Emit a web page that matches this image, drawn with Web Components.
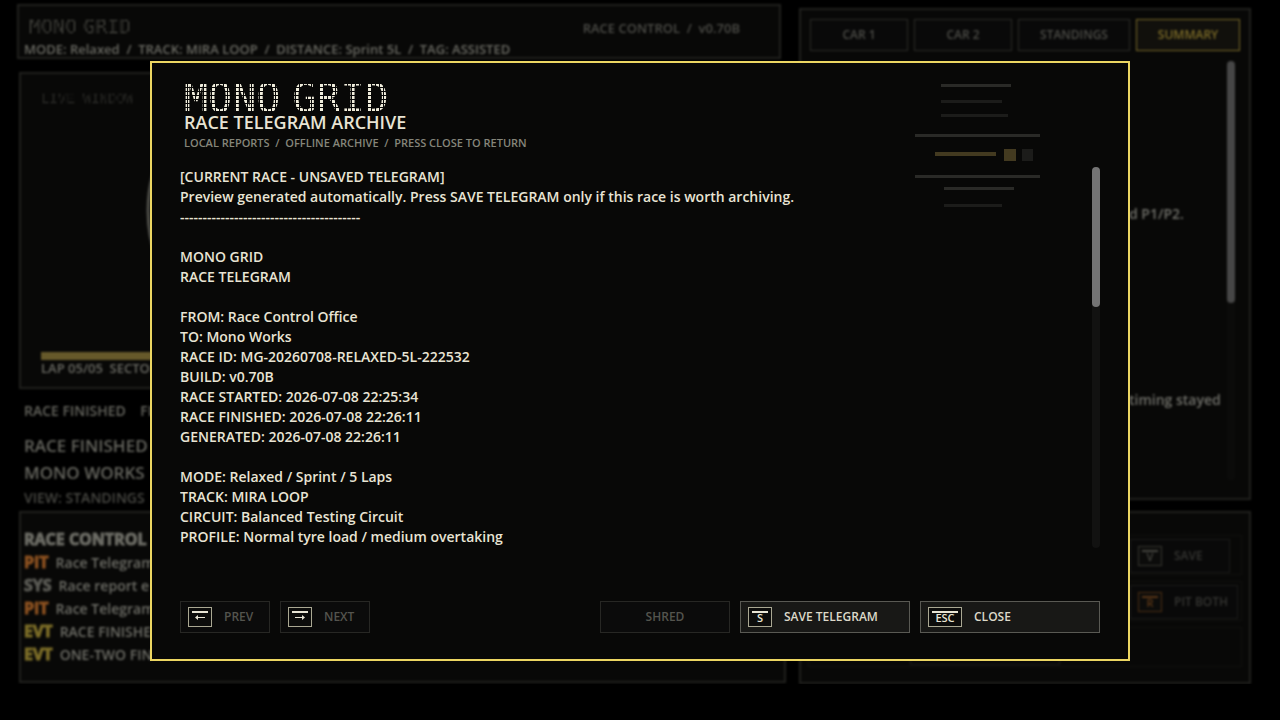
<!DOCTYPE html>
<html lang="en">
<head>
<meta charset="utf-8">
<title>Mono Grid - Race Telegram Archive</title>
<style>
  html, body { margin: 0; min-height: 100%; background: #000; }
  body { font: 600 14px/20px "Open Sans", "Noto Sans", sans-serif; color: #e8e4d4; overflow: hidden; }
</style>
</head>
<body>
<race-dashboard></race-dashboard>
<telegram-archive></telegram-archive>

<script>
const define = (name, html, setup) => {
  const template = document.createElement('template');
  template.innerHTML = html;
  customElements.define(name, class extends HTMLElement {
    constructor() {
      super();
      this.attachShadow({ mode: 'open' }).append(template.content.cloneNode(true));
    }
    connectedCallback() { if (setup) setup(this, this.shadowRoot); }
  });
};

define('dot-text', `<style>
  :host {
    --pitch: 4px; --dot: 3px;
    display: flex; gap: 12px; font-family: "DejaVu Sans Mono", monospace; font-weight: 400; white-space: nowrap;
    mask-image: linear-gradient(90deg, #000 var(--dot), transparent 0), linear-gradient(#000 var(--dot), transparent 0);
    mask-size: var(--pitch) var(--pitch);
    mask-composite: intersect;
  }
</style><slot></slot>`);

define('hud-panel', `
<style>
  :host { display: block; box-sizing: border-box; border: 2px solid #20201d; background: #080807; }
</style><slot></slot>`);

define('key-cap', `
<style>
  :host {
    display: inline-flex; flex: none; flex-direction: column; align-items: center; box-sizing: border-box;
    min-width: 24px; height: 20px; padding: 3px 3px 0; border: 1px solid #aaa893; background: #0c0c0b;
    font-size: 11px; line-height: 10px; color: #e8e4d4;
  }
  :host([wide]) { min-width: 34px; }
  i { align-self: stretch; height: 2px; background: currentColor; }
  span { display: block; }
</style><i></i><span><slot></slot></span>`);

define('arrow-icon', `
<style>
  :host { display: block; }
  :host([right]) svg { transform: scaleX(-1); }
  svg { display: block; }
</style>
<svg width="10" height="9" viewBox="0 0 10 9" aria-hidden="true"><path d="M0 4.5 3 2v2h7v1H3v2z" fill="currentColor"/></svg>`);

define('scroll-rail', `
<style>
  :host { display: block; width: 8px; border-radius: 4px; background: #121211; }
  div { height: var(--thumb, 140px); border-radius: 4px; background: var(--tone, #747474); }
</style><div></div>`);

define('hud-button', `
<style>
  :host { display: block; }
  button {
    display: flex; align-items: center; justify-content: var(--align, flex-start); gap: 12px;
    box-sizing: border-box; width: 100%; height: 32px; padding: 0 7px; border: 1px solid #595953; border-radius: 0;
    background: #181816; color: #dcd9c9; font: 600 12px/16px "Open Sans", "Noto Sans", sans-serif; text-align: left;
  }
  :host([quiet]) button { border-color: #272724; background: #0b0b0b; color: #54544e; }
  :host([tab]) button { border-color: #2a2a27; background: #090909; color: #4c4c47; }
  :host([tab][on]) button { border-color: #7a6a28; background: #11100c; color: #7d6c28; }
</style>
<button type="button"><slot name="key"></slot><slot></slot></button>`,
(host, root) => { if (host.hasAttribute('quiet')) root.querySelector('button').disabled = true; });

define('log-line', `
<style>
  :host { display: block; height: 23px; font-size: 14px; line-height: 23px; white-space: nowrap; color: #6e6e67; }
  b { margin-right: 7px; font-size: 16px; font-weight: 700; color: var(--tag, #5a5a54); -webkit-text-stroke: 1px currentColor; }
</style><b><slot name="tag"></slot></b><slot></slot>`);

define('race-header', `
<style>
  :host { display: block; }
  hud-panel { height: 55px; padding: 10px 39px 0 5px; }
  .top { display: flex; justify-content: space-between; height: 25px; }
  dot-text { --pitch: 2px; --dot: 1px; gap: 6px; font-size: 20px; line-height: 20px; height: 20px; color: #b8b8aa; padding-left: 5px; }
  .ver { padding-top: 2px; font-size: 13px; color: #4c4c47; white-space: pre; }
  .mode { font-size: 13px; line-height: 17px; color: #6a6a63; white-space: pre; }
</style>
<hud-panel>
  <div class="top"><dot-text><span>MONO</span> <span>GRID</span></dot-text><div class="ver">RACE CONTROL  /  v0.70B</div></div>
  <div class="mode">MODE: Relaxed  /  TRACK: MIRA LOOP  /  DISTANCE: Sprint 5L  /  TAG: ASSISTED</div>
</hud-panel>`);

define('live-window', `
<style>
  :host { display: block; }
  hud-panel { display: flex; flex-direction: column; height: 317px; padding: 16px 20px 10px; }
  dot-text { --pitch: 2px; --dot: 1px; gap: 8px; font-size: 14px; line-height: 16px; color: #6c6c65; }
  svg { flex: 1; display: block; min-height: 0; margin-left: 95px; }
  .bar { height: 8px; background: #66592a; }
  .lap { font-size: 13px; line-height: 17px; color: #6a6a63; white-space: pre; }
</style>
<hud-panel>
  <dot-text><span>LIVE</span> <span>WINDOW</span></dot-text>
  <svg viewBox="0 0 600 244" preserveAspectRatio="xMinYMin meet" aria-hidden="true">
    <ellipse cx="72" cy="104" rx="60" ry="90" fill="none" stroke="#50504a" stroke-width="3"/>
  </svg>
  <div class="bar"></div>
  <div class="lap">LAP 05/05  SECTOR</div>
</hud-panel>`);

define('race-status', `
<style>
  :host { display: block; padding: 11px 7px 2px 5px; color: #65655e; }
  p { margin: 0; white-space: pre; }
  .a { font-size: 14px; line-height: 22px; padding-bottom: 10px; }
  .b { font-size: 17px; line-height: 27px; }
  .c { font-size: 14px; line-height: 23px; color: #484843; }
</style>
<p class="a">RACE FINISHED    FI</p>
<p class="b">RACE FINISHED</p>
<p class="b">MONO WORKS</p>
<p class="c">VIEW: STANDINGS</p>`);

define('race-log', `
<style>
  :host { display: block; }
  hud-panel { height: 172px; padding: 14px 3px 0; overflow: hidden; }
  h2 { margin: 0; font-size: 16px; line-height: 24px; font-weight: 700; color: #6c6c65; -webkit-text-stroke: 1px currentColor; }
  .pit { --tag: #8a5020; } .evt { --tag: #7c6d28; }
</style>
<hud-panel>
  <h2>RACE CONTROL</h2>
  <log-line class="pit"><span slot="tag">PIT</span>Race Telegram</log-line>
  <log-line><span slot="tag">SYS</span>Race report e</log-line>
  <log-line class="pit"><span slot="tag">PIT</span>Race Telegram</log-line>
  <log-line class="evt"><span slot="tag">EVT</span>RACE FINISHE</log-line>
  <log-line class="evt"><span slot="tag">EVT</span>ONE-TWO FIN</log-line>
</hud-panel>`);

define('summary-panel', `
<style>
  :host { display: block; }
  hud-panel { height: 492px; padding: 9px 9px 0; }
  nav { display: grid; grid-template-columns: 98fr 98fr 112fr 104fr; gap: 6px; --align: center; }
  .view { display: flex; justify-content: space-between; padding: 10px 5px 0 319px; }
  .text { padding-top: 143px; font-size: 14px; color: #70706a; white-space: nowrap; }
  p { margin: 0 0 166px; }
  scroll-rail { height: 420px; background: #0b0b0a; --thumb: 242px; --tone: #464646; }
</style>
<hud-panel>
  <nav>
    <hud-button tab>CAR 1</hud-button><hud-button tab>CAR 2</hud-button>
    <hud-button tab>STANDINGS</hud-button><hud-button tab on>SUMMARY</hud-button>
  </nav>
  <div class="view">
    <div class="text"><p>d P1/P2.</p><p>timing stayed</p></div>
    <scroll-rail></scroll-rail>
  </div>
</hud-panel>`);

define('command-panel', `
<style>
  :host { display: block; }
  hud-panel { display: flex; flex-direction: column; gap: 6px; height: 173px; padding: 22px 7px 0; }
  .row { display: flex; justify-content: flex-end; box-sizing: border-box; height: 40px; padding: 3px; border: 1px solid #10100e; }
  .row.first { padding-right: 11px; }
  .row.last { padding-right: 181px; }
  button {
    display: flex; align-items: center; gap: 12px; box-sizing: border-box; width: 150px; height: 34px; padding: 0 7px;
    border: 1px solid #1b1b19; background: #090909; color: #353532; font: 600 12px/16px "Open Sans", "Noto Sans", sans-serif; white-space: nowrap;
  }
  .first button { width: 100px; }
  .mid button { width: 108px; }
  key-cap { border-color: #36362f; color: #44443f; }
  .mid key-cap { border-color: #4a2d12; color: #5a3616; }
</style>
<hud-panel>
  <div class="row first"><button type="button"><key-cap>V</key-cap>SAVE</button></div>
  <div class="row mid"><button type="button"><key-cap>R</key-cap>PIT BOTH</button></div>
  <div class="row last"><button type="button" aria-label="More"></button></div>
</hud-panel>`);

define('race-dashboard', `
<style>
  :host { display: grid; grid-template-columns: 1fr 452px; gap: 13px; padding: 4px 29px 0 17px; filter: blur(1px); }
  race-header { margin-right: 5px; }
  live-window { margin: 13px 0 0 2px; }
  race-status, race-log { margin-left: 2px; }
  .right { display: flex; flex-direction: column; gap: 11px; padding-top: 4px; }
</style>
<div>
  <race-header></race-header>
  <live-window></live-window>
  <race-status></race-status>
  <race-log></race-log>
</div>
<div class="right">
  <summary-panel></summary-panel>
  <command-panel></command-panel>
</div>`);

define('printer-art', `
<style>:host { display: block; } svg { display: block; }</style>
<svg width="126" height="124" viewBox="0 0 126 124" aria-hidden="true">
  <path fill="#2a2a27" d="M26 1h70v3H26zM0 51h125v3H0zM0 92h125v3H0zM29 104h70v3H29z"/>
  <path fill="#1c1c1a" d="M26 17h61v3H26zM26 31h67v3H26zM29 121h58v3H29z"/>
  <path fill="#433a20" d="M20 69h61v4H20zM89 66h12v12H89z"/>
  <path fill="#1c1c1a" d="M107 66h11v12h-11z"/>
</svg>`);

define('telegram-archive', `
<style>
  :host { position: fixed; inset: 0; display: grid; place-items: center; padding-top: 2px; }
  section {
    position: relative; display: flex; flex-direction: column; box-sizing: border-box;
    width: calc(100% - 300px); height: 600px; padding: 21px 28px 26px;
    border: 2px solid #ecd662; background: #080807;
  }
  header { padding-left: 4px; height: 83px; }
  dot-text { font-size: 40px; line-height: 28px; height: 28px; color: #f0eddc; }
  h1, h2, p { margin: 0; font-weight: 600; }
  h2 { font-size: 18px; line-height: 20px; }
  p { padding-top: 3px; font-size: 11px; line-height: 16px; color: #85857a; white-space: pre; }
  printer-art { position: absolute; top: 20px; right: 87px; }
  .view { display: flex; justify-content: space-between; height: 381px; overflow: hidden; }
  pre { margin: 0; font: 600 14px/20px "Open Sans", "Noto Sans", sans-serif; }
  scroll-rail { height: 381px; }
  footer { display: flex; gap: 10px; margin-top: auto; }
  .page { width: 90px; }
  .shred { width: 130px; margin-left: auto; --align: center; }
  .save { width: 170px; }
  .close { width: 180px; }
</style>
<section role="dialog" aria-modal="true" aria-labelledby="title">
  <header>
    <h1><dot-text><span>MONO</span> <span>GRID</span></dot-text></h1>
    <h2 id="title">RACE TELEGRAM ARCHIVE</h2>
    <p>LOCAL REPORTS  /  OFFLINE ARCHIVE  /  PRESS CLOSE TO RETURN</p>
  </header>
  <printer-art></printer-art>
  <div class="view">
<pre>[CURRENT RACE - UNSAVED TELEGRAM]
Preview generated automatically. Press SAVE TELEGRAM only if this race is worth archiving.
----------------------------------------

MONO GRID
RACE TELEGRAM

FROM: Race Control Office
TO: Mono Works
RACE ID: MG-20260708-RELAXED-5L-222532
BUILD: v0.70B
RACE STARTED: 2026-07-08 22:25:34
RACE FINISHED: 2026-07-08 22:26:11
GENERATED: 2026-07-08 22:26:11

MODE: Relaxed / Sprint / 5 Laps
TRACK: MIRA LOOP
CIRCUIT: Balanced Testing Circuit
PROFILE: Normal tyre load / medium overtaking</pre>
    <scroll-rail></scroll-rail>
  </div>
  <footer>
    <hud-button class="page" quiet><key-cap slot="key"><arrow-icon></arrow-icon></key-cap>PREV</hud-button>
    <hud-button class="page" quiet><key-cap slot="key"><arrow-icon right></arrow-icon></key-cap>NEXT</hud-button>
    <hud-button class="shred" quiet>SHRED</hud-button>
    <hud-button class="save"><key-cap slot="key">S</key-cap>SAVE TELEGRAM</hud-button>
    <hud-button class="close"><key-cap wide slot="key">ESC</key-cap>CLOSE</hud-button>
  </footer>
</section>`);
</script>
</body>
</html>
